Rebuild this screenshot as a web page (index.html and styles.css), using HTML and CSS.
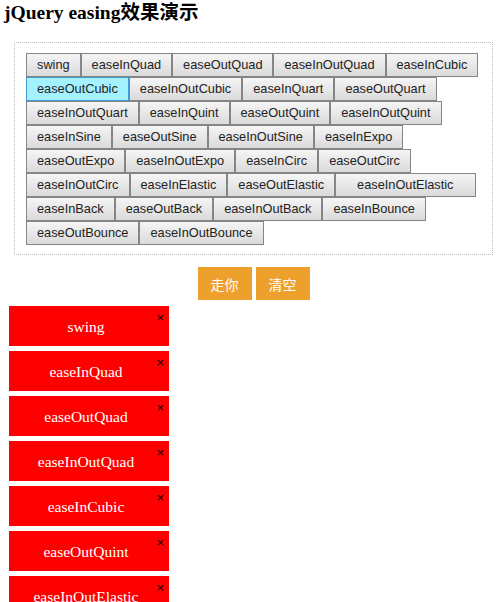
FILE: index.html
```html
<!DOCTYPE html>
<html lang="zh">
<head>
<meta charset="utf-8">
<title>jQuery easing效果演示</title>
<link rel="stylesheet" href="styles.css">
</head>
<body>
<h3 class="title">jQuery easing效果演示</h3>
<div class="panel">
  <div class="row">
    <button class="ease">swing</button><button class="ease">easeInQuad</button><button class="ease">easeOutQuad</button><button class="ease">easeInOutQuad</button><button class="ease">easeInCubic</button>
  </div>
  <div class="row">
    <button class="ease active">easeOutCubic</button><button class="ease">easeInOutCubic</button><button class="ease">easeInQuart</button><button class="ease">easeOutQuart</button>
  </div>
  <div class="row">
    <button class="ease">easeInOutQuart</button><button class="ease">easeInQuint</button><button class="ease">easeOutQuint</button><button class="ease">easeInOutQuint</button>
  </div>
  <div class="row">
    <button class="ease">easeInSine</button><button class="ease">easeOutSine</button><button class="ease">easeInOutSine</button><button class="ease">easeInExpo</button>
  </div>
  <div class="row">
    <button class="ease">easeOutExpo</button><button class="ease">easeInOutExpo</button><button class="ease">easeInCirc</button><button class="ease">easeOutCirc</button>
  </div>
  <div class="row">
    <button class="ease">easeInOutCirc</button><button class="ease">easeInElastic</button><button class="ease">easeOutElastic</button><button class="ease wide">easeInOutElastic</button>
  </div>
  <div class="row">
    <button class="ease">easeInBack</button><button class="ease">easeOutBack</button><button class="ease">easeInOutBack</button><button class="ease">easeInBounce</button>
  </div>
  <div class="row">
    <button class="ease">easeOutBounce</button><button class="ease">easeInOutBounce</button>
  </div>
</div>
<div class="actions">
  <button class="act">走你</button><button class="act">清空</button>
</div>
<div class="list">
  <div class="item">swing<span class="close">×</span></div>
  <div class="item">easeInQuad<span class="close">×</span></div>
  <div class="item">easeOutQuad<span class="close">×</span></div>
  <div class="item">easeInOutQuad<span class="close">×</span></div>
  <div class="item">easeInCubic<span class="close">×</span></div>
  <div class="item">easeOutQuint<span class="close">×</span></div>
  <div class="item">easeInOutElastic<span class="close">×</span></div>
</div>
</body>
</html>
```

FILE: styles.css
```css
html, body {
  margin: 0;
  padding: 0;
  background: #fff;
}
body {
  font-family: "Liberation Serif", "Noto Sans CJK SC", serif;
  overflow: hidden;
}
.title {
  margin: 0 0 0 4px;
  font-size: 19.5px;
  line-height: 26px;
  font-weight: bold;
  color: #000;
}
.panel {
  margin: 16px 6px 0 14px;
  border: 1px dotted #bdbdbd;
  padding: 10px 10px 9px 11px;
}
.row {
  display: flex;
}
.ease {
  height: 24px;
  margin: 0;
  padding: 0 10px;
  border: 1px solid #858585;
  background: linear-gradient(#f5f5f5, #dadada);
  font-family: "Liberation Sans", Arial, sans-serif;
  font-size: 12.75px;
  color: #222;
  line-height: 22px;
  white-space: nowrap;
}
.ease.wide {
  padding: 0 21px;
}
.ease.active {
  background: #a4f2ff;
  border-color: #3c9bd6;
}
.actions {
  margin: 12px 6px 0 14px;
  display: flex;
  justify-content: center;
  gap: 4px;
}
.act {
  width: 54px;
  height: 33px;
  margin: 0;
  padding: 0;
  border: none;
  background: #eea02d;
  color: #fff;
  font-family: "Noto Sans CJK SC", sans-serif;
  font-size: 14px;
}
.list {
  margin: 6px 0 0 9px;
}
.item {
  position: relative;
  box-sizing: border-box;
  width: 160px;
  height: 40px;
  margin-bottom: 5px;
  padding-right: 6px;
  background: #ff0000;
  color: #fff;
  font-size: 15.5px;
  line-height: 42px;
  text-align: center;
}
.close {
  position: absolute;
  top: 5px;
  right: 5px;
  color: #000;
  font-family: "Liberation Sans", Arial, sans-serif;
  font-size: 13px;
  line-height: 14px;
}
```
